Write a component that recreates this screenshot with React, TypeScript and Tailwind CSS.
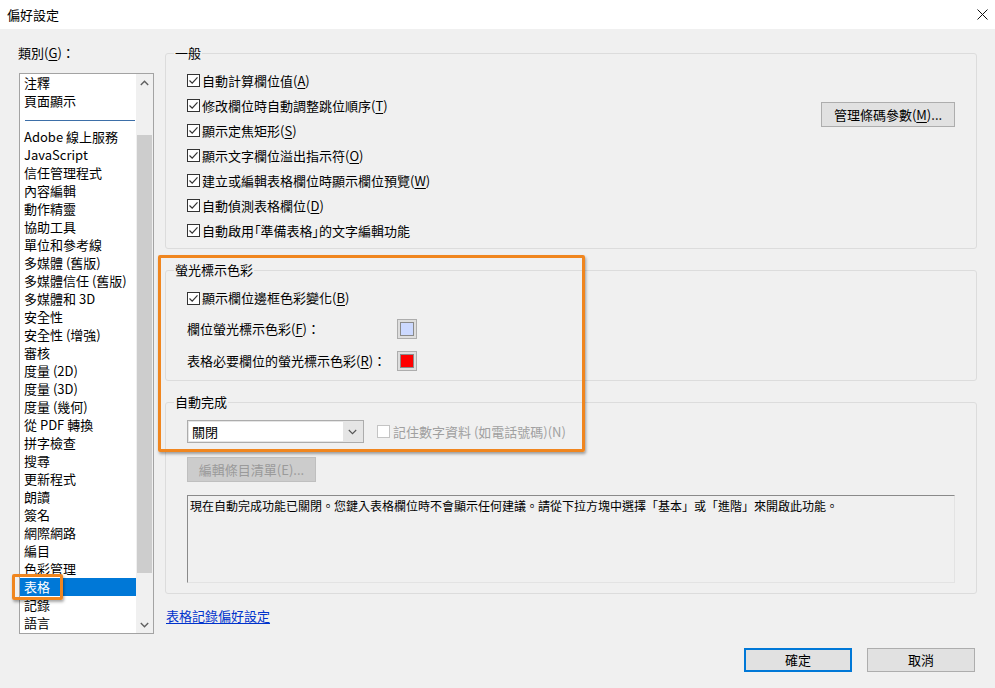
import React from "react";

const FONT = { fontFamily: '"Noto Sans CJK TC", "Noto Sans", sans-serif' };

function Check({ checked = true, disabled = false }: { checked?: boolean; disabled?: boolean }) {
  return (
    <svg width="13" height="13" viewBox="0 0 13 13" className="shrink-0">
      <rect x="0.5" y="0.5" width="12" height="12" fill="#ffffff" stroke={disabled ? "#c4c4c4" : "#333333"} />
      {checked && (
        <path d="M2.5 6.5 L5.2 9.2 L10.5 3.4" fill="none" stroke="#333333" strokeWidth="1.2" />
      )}
    </svg>
  );
}

function Acc({ text, k, tail = "" }: { text: string; k: string; tail?: string }) {
  return (
    <span>
      {text}(<span className="underline underline-offset-2">{k}</span>){tail}
    </span>
  );
}

function CheckRow({ text, k, h = "h-[25px]" }: { text: string; k?: string; h?: string }) {
  return (
    <div className={`${h} flex items-center gap-[2px]`}>
      <Check />
      {k ? <Acc text={text} k={k} /> : <span className="[font-feature-settings:'palt']">{text}</span>}
    </div>
  );
}

const items = [
  "Adobe 線上服務",
  "JavaScript",
  "信任管理程式",
  "內容編輯",
  "動作精靈",
  "協助工具",
  "單位和參考線",
  "多媒體 (舊版)",
  "多媒體信任 (舊版)",
  "多媒體和 3D",
  "安全性",
  "安全性 (增強)",
  "審核",
  "度量 (2D)",
  "度量 (3D)",
  "度量 (幾何)",
  "從 PDF 轉換",
  "拼字檢查",
  "搜尋",
  "更新程式",
  "朗讀",
  "簽名",
  "網際網路",
  "編目",
  "色彩管理",
  "表格",
  "記錄",
  "語言",
];

function Swatch({ color }: { color: string }) {
  return (
    <div className="w-[20px] h-[20px] border border-[#adadad] bg-[#dedede] p-[2px] shrink-0">
      <div className="w-full h-full border border-[#8a8a8a]" style={{ background: color }} />
    </div>
  );
}

export default function App() {
  return (
    <div className="w-[995px] h-[688px] bg-[#f0f0f0] relative overflow-hidden text-[13px] text-black leading-[18px]" style={FONT}>
      {/* title bar */}
      <div className="h-[29px] bg-white flex items-center justify-between pl-[7px] pr-[6px]">
        <span>偏好設定</span>
        <svg width="11" height="11" viewBox="0 0 11 11" className="mr-[1px]">
          <path d="M0.5 0.5 L10.5 10.5 M10.5 0.5 L0.5 10.5" stroke="#111" strokeWidth="1" />
        </svg>
      </div>

      <div className="flex pl-[19px] pt-[15px]">
        {/* left column */}
        <div className="w-[135px] shrink-0">
          <div className="h-[18px] -ml-[1px]">
            類別(<span className="underline underline-offset-2">G</span>)：
          </div>
          <div className="mt-[11px] h-[561px] border border-[#a3a3a3] bg-white flex">
            <div className="w-[116px] shrink-0">
              <div className="h-[18px] pl-[4px]">注釋</div>
              <div className="h-[18px] pl-[4px]">頁面顯示</div>
              <div className="h-[18px] pt-[10px] pl-[5px] pr-[1px]">
                <div className="h-[1px] bg-[#3d6fa8]" />
              </div>
              {items.map((it) => (
                <div
                  key={it}
                  className={
                    it === "表格"
                      ? "h-[18px] pl-[4px] bg-[#0078d7] text-white whitespace-nowrap"
                      : "h-[18px] pl-[4px] whitespace-nowrap"
                  }
                >
                  {it}
                </div>
              ))}
            </div>
            <div className="w-[17px] shrink-0 bg-[#f0f0f0] flex flex-col">
              <div className="h-[17px] flex items-center justify-center">
                <svg width="9" height="6" viewBox="0 0 9 6">
                  <path d="M0.8 5 L4.5 1.3 L8.2 5" fill="none" stroke="#606060" strokeWidth="1.4" />
                </svg>
              </div>
              <div className="h-[44px]" />
              <div className="h-[438px] mx-[1px] bg-[#cdcdcd]" />
              <div className="flex-1" />
              <div className="h-[17px] flex items-center justify-center">
                <svg width="9" height="6" viewBox="0 0 9 6">
                  <path d="M0.8 1 L4.5 4.7 L8.2 1" fill="none" stroke="#606060" strokeWidth="1.4" />
                </svg>
              </div>
            </div>
          </div>
        </div>

        {/* right column */}
        <div className="ml-[11px] w-[812px] shrink-0">
          {/* 一般 */}
          <fieldset className="border border-[#dcdcdc] rounded-[3px]">
            <legend className="ml-[8px] px-[1px] h-[18px] leading-[18px]">一般</legend>
            <div className="flex items-start justify-between">
              <div className="pl-[21px] pt-[6px] pb-[5px]">
                <CheckRow text="自動計算欄位值" k="A" />
                <CheckRow text="修改欄位時自動調整跳位順序" k="T" />
                <CheckRow text="顯示定焦矩形" k="S" />
                <CheckRow text="顯示文字欄位溢出指示符" k="O" />
                <CheckRow text="建立或編輯表格欄位時顯示欄位預覽" k="W" />
                <CheckRow text="自動偵測表格欄位" k="D" />
                <CheckRow text="自動啟用「準備表格」的文字編輯功能" />
              </div>
              <button className="mt-[40px] mr-[21px] w-[134px] h-[25px] bg-[#e1e1e1] border border-[#adadad] flex items-center justify-center">
                <Acc text="管理條碼參數" k="M" tail="..." />
              </button>
            </div>
          </fieldset>

          {/* 螢光標示色彩 */}
          <fieldset className="mt-[12px] border border-[#dcdcdc] rounded-[3px]">
            <legend className="ml-[8px] px-[1px] h-[18px] leading-[18px]">螢光標示色彩</legend>
            <div className="pl-[21px] pt-[7px] pb-[9px]">
              <CheckRow text="顯示欄位邊框色彩變化" k="B" h="h-[24px]" />
              <div className="mt-[8px] h-[21px] flex items-center">
                <div className="w-[210px]">
                  <Acc text="欄位螢光標示色彩" k="F" tail="：" />
                </div>
                <Swatch color="#ccd9ff" />
              </div>
              <div className="mt-[11px] h-[21px] flex items-center">
                <div className="w-[210px]">
                  <Acc text="表格必要欄位的螢光標示色彩" k="R" tail="：" />
                </div>
                <Swatch color="#ff0000" />
              </div>
            </div>
          </fieldset>

          {/* 自動完成 */}
          <fieldset className="mt-[12px] border border-[#dcdcdc] rounded-[3px]">
            <legend className="ml-[8px] px-[1px] h-[18px] leading-[18px]">自動完成</legend>
            <div className="pl-[21px] pr-[21px] pt-[9px] pb-[10px]">
              <div className="flex items-center">
                <div className="w-[177px] h-[23px] border border-[#acacac] bg-[#e5e5e5] flex p-[1px]">
                  <div className="flex-1 bg-white pl-[3px] leading-[19px]">關閉</div>
                  <div className="w-[19px] flex items-center justify-center">
                    <svg width="9" height="6" viewBox="0 0 9 6">
                      <path d="M0.8 1 L4.5 4.7 L8.2 1" fill="none" stroke="#555" strokeWidth="1.1" />
                    </svg>
                  </div>
                </div>
                <div className="ml-[13px] flex items-center gap-[3px] text-[#a0a0a0]">
                  <Check checked={false} disabled />
                  <span>記住數字資料 (如電話號碼)(N)</span>
                </div>
              </div>
              <button className="mt-[14px] w-[129px] h-[25px] bg-[#cccccc] border border-[#bfbfbf] text-[#9a9a9a] flex items-center justify-center">
                編輯條目清單(E)...
              </button>
              <div className="mt-[13px] h-[88px] border-t border-l border-[#8a8a8a] border-r-[#e3e3e3] border-b-[#e3e3e3] border-r border-b pl-[2px] pt-[1px] text-[12px]">
                現在自動完成功能已關閉。您鍵入表格欄位時不會顯示任何建議。請從下拉方塊中選擇「基本」或「進階」來開啟此功能。
              </div>
            </div>
          </fieldset>

          <div className="mt-[13px] pl-[1px] h-[18px]">
            <span className="text-[#0033cc] underline underline-offset-2">表格記錄偏好設定</span>
          </div>

          <div className="mt-[23px] flex justify-end gap-[15px] pr-[2px]">
            <button className="w-[108px] h-[24px] bg-[#e1e1e1] border-2 border-[#0078d7] flex items-center justify-center">
              確定
            </button>
            <button className="w-[108px] h-[24px] bg-[#e1e1e1] border border-[#adadad] flex items-center justify-center">
              取消
            </button>
          </div>
        </div>
      </div>

      {/* orange annotation boxes */}
      <div className="absolute left-[158px] top-[255px] w-[427px] h-[197px] border-[3px] border-[#f0861f] rounded-[2px] shadow-[1px_2px_3px_rgba(0,0,0,0.35)] pointer-events-none" />
      <div className="absolute left-[12px] top-[574px] w-[51px] h-[26px] border-[3px] border-[#f0861f] rounded-[2px] shadow-[1px_2px_3px_rgba(0,0,0,0.35)] pointer-events-none" />
    </div>
  );
}
